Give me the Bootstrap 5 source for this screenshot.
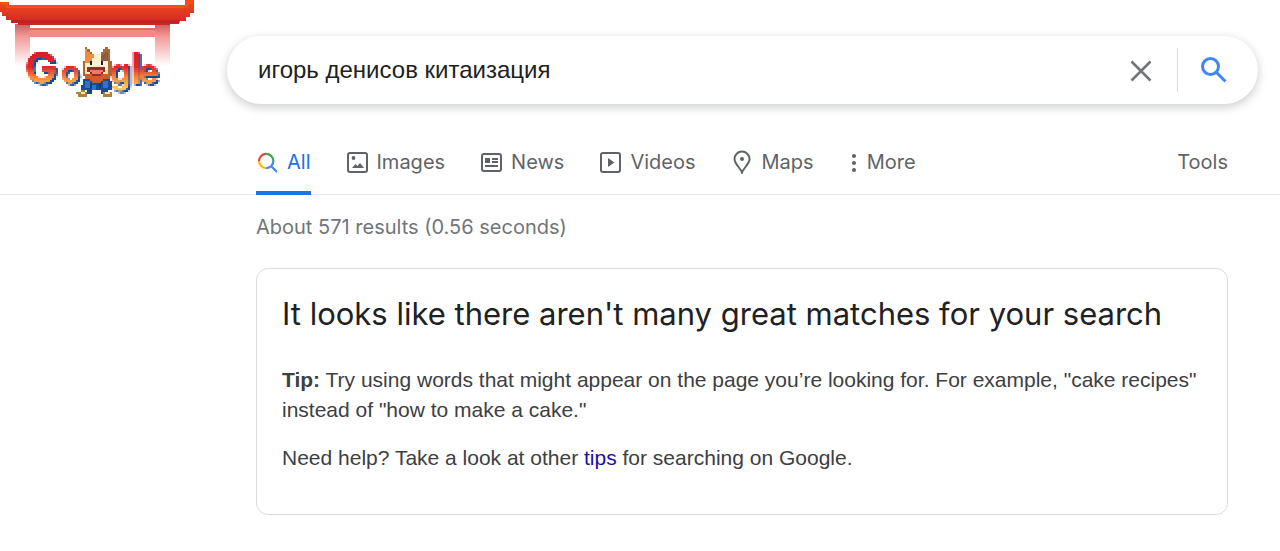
<!DOCTYPE html>
<html lang="en">
<head>
<meta charset="utf-8">
<meta name="viewport" content="width=device-width, initial-scale=1">
<title>игорь денисов китаизация - Google Search</title>
<link href="https://cdn.jsdelivr.net/npm/bootstrap@5.3.0/dist/css/bootstrap.min.css" rel="stylesheet">
<style>
:root { --brand-font: Inter, "Liberation Sans", sans-serif; --gutter: 256px; --edge: 52px; }
body { font-family: "Liberation Sans", Arial, sans-serif; color: #3c4043; background: #fff; }
.doodle-col { width: 227px; }
.doodle { display: block; width: 200px; height: 104px; }
.search-pill { height: 68px; border-radius: 34px; margin: 36px 22px 0 0; padding-left: 31px; box-shadow: 0 3px 9px 1px rgba(32,33,36,.2); }
.search-pill input { font-size: 24px; line-height: 30px; color: #202124; outline: 0; }
.search-pill button { color: #70757a; }
.clear-btn { width: 72px; }
.go-btn { width: 81px; border-left: 1px solid #dadce0; height: 44px; padding: 0 8px 0 0; }
.tabs-bar { margin-top: 30px; height: 61px; padding: 0 var(--edge) 0 var(--gutter); border-bottom: 1px solid #e4e6e9; font-family: var(--brand-font); font-size: 20px; line-height: 24px; }
.tabs-list { gap: 36px; }
.tab-link { display: flex; align-items: center; gap: 9px; color: #5f6368; text-decoration: none; height: 61px; padding-bottom: 6px; }
.tab-link.active { color: #1a73e8; box-shadow: inset 0 -4px #1a73e8; gap: 10px; }
.tab-link svg { width: 21px; height: 24px; }
.tab-link .dots { width: 8px; }
.results { padding: 20px var(--edge) 0 var(--gutter); }
.stats { font-family: var(--brand-font); font-size: 20px; line-height: 24px; color: #70757a; margin-bottom: 29px; }
.notice { border: 1px solid #dadce0; border-radius: 12px; padding: 25px 25px 41px; font-size: 21px; line-height: 30px; color: #3c4043; }
.notice h1 { font-family: var(--brand-font); font-size: 31px; line-height: 40px; font-weight: 400; color: #202124; margin-bottom: 31px; }
.notice p { margin-bottom: 18px; }
.notice a { color: #1a0dab; text-decoration: none; }
</style>
</head>
<body>
<header>
  <form class="d-flex align-items-start" role="search">
    <a href="#" class="doodle-col flex-shrink-0" aria-label="Google home">
      <svg class="doodle" viewBox="0 0 200 104">
        <defs>
          <linearGradient id="beam" x2="0" y2="1"><stop offset="0" stop-color="#f04a12"/><stop offset=".5" stop-color="#e03a22"/><stop offset="1" stop-color="#c82422"/></linearGradient>
          <linearGradient id="post" x2="0" y2="1"><stop offset="0" stop-color="#c96060"/><stop offset=".3" stop-color="#f39a98"/><stop offset="1" stop-color="#fff"/></linearGradient>
          <linearGradient id="sunset" gradientUnits="userSpaceOnUse" x1="0" y1="52" x2="0" y2="92"><stop offset="0" stop-color="#dd1c25"/><stop offset=".36" stop-color="#e4252c"/><stop offset=".6" stop-color="#f5803c"/><stop offset=".85" stop-color="#fdc14e"/><stop offset="1" stop-color="#fed46c"/></linearGradient>
          <filter id="pixels" filterUnits="userSpaceOnUse" x="20" y="40" width="150" height="62" color-interpolation-filters="sRGB">
            <feDropShadow dx="2" dy="2" stdDeviation="0" flood-color="#124c9b" result="letters"/>
            <feFlood x="20" y="40" width="1" height="1" flood-color="#000"/>
            <feComposite in2="SourceGraphic" operator="over" x="20" y="40" width="2" height="2" result="dot"/>
            <feTile in="dot" result="grid"/>
            <feComposite in="letters" in2="grid" operator="in" result="a"/>
            <feOffset in="a" dx="1" dy="0" result="b"/>
            <feOffset in="a" dx="0" dy="1" result="c"/>
            <feOffset in="a" dx="1" dy="1" result="d"/>
            <feMerge><feMergeNode in="a"/><feMergeNode in="b"/><feMergeNode in="c"/><feMergeNode in="d"/></feMerge>
          </filter>
        </defs>
        <path fill="url(#post)" d="M15 24h15v42H15zM155 24h15v42h-15z"/>
        <path fill="#f18a84" d="M29 28h126v9H29z"/><path fill="#e96b65" d="M29 28h126v2H29z"/>
        <path fill="url(#beam)" d="M0 2h9v3h176V0h9v13h-4v4h-4v4h-7v3h-9v1H18v-2h-7v-3H6v-4H2v-4H0z"/>
        <path fill="#f4571a" d="M1 2h7v3h178V1h7v3h-5v4H6V5H1z" opacity=".7"/>
        <path fill="#b61e22" d="M12 20h168v3H12z" opacity=".6"/>
        <g font-family="Inter, sans-serif" font-weight="700" fill="url(#sunset)" filter="url(#pixels)">
          <text x="24" y="83" font-size="44">G</text><text x="60" y="83" font-size="32">o</text><text x="109" y="83" font-size="34">g</text><text x="130" y="83" font-size="42">l</text><text x="138" y="83" font-size="34">e</text>
        </g>
        <g transform="translate(76 47) scale(2.250)" shape-rendering="crispEdges">
          <path fill="#a86a34" d="M4 0h1v1h1v1h1v1h4V2h1V1h1V0h1v1h1v5h1v7h-1v2h-2v2H6v-2H4v-2H3V6h1z"/>
          <path fill="#ef8d3c" d="M4 1h1v1h1v1h2v2H7v2H4z"/>
          <path fill="#8e5948" d="M11 4h1V3h1V2h1v5h-3z"/>
          <path fill="#fff1cd" d="M8 3h3v3h3v6H4V7h3V5h1z"/>
          <path fill="#fbd89a" d="M4 10h1v2H4zM13 10h1v2h-1z"/>
          <path fill="#241d28" d="M6 6h1v2H6zM11 6h1v2h-1z"/>
          <path fill="#8d2f2d" d="M5 9h8v2h-1v1h-1v1H7v-1H6v-1H5z"/>
          <path fill="#f47762" d="M6 10h6v1h-1v1H7v-1H6z"/>
          <path fill="#d45a28" d="M4 12h3v1h4v-1h3v2h-2v1H6v-1H4z"/>
          <path fill="#124c9b" d="M3 14h3v1h1v1h4v-1h1v-1h3v1h1v4h-2v2h-3v-2H7v2H5v-2H4v1H2v-3h1z"/>
          <path fill="#2f70d2" d="M4 15h2v3H4zM7 17h2v2H7zM12 15h2v3h-2z"/>
          <path fill="#173b75" d="M6 16h1v2H6zM10 16h1v2h-1zM6 19h1v1H6z"/>
          <path fill="#a98249" d="M2 19h2v1h1v2H1v-1H0v-1h2zM12 20h4v2h-4z"/>
          <path fill="#fbe4b5" d="M2 20h2v1H2zM13 20h2v1h-2z"/>
        </g>
      </svg>
    </a>
    <div class="search-pill d-flex align-items-center flex-grow-1 bg-white">
      <input class="border-0 p-0 flex-grow-1 bg-transparent" type="text" aria-label="Search" value="игорь денисов китаизация">
      <button class="clear-btn btn p-0 border-0" type="reset" aria-label="Clear">
        <svg width="22" height="22" viewBox="0 0 22 22" fill="none" stroke="#70757a" stroke-width="2.600"><path d="M1.500 1.500l19 19M20.500 1.500l-19 19"/></svg>
      </button>
      <button class="go-btn bg-transparent border-top-0 border-end-0 border-bottom-0" type="submit" aria-label="Search">
        <svg width="26" height="26" viewBox="0 0 26 26" fill="none" stroke="#4285f4" stroke-width="3"><circle cx="9.500" cy="9.500" r="8"/><path d="M15.500 15.500l9 9"/></svg>
      </button>
    </div>
  </form>
  <nav class="tabs-bar d-flex justify-content-between" aria-label="Search types">
    <div class="tabs-list d-flex">
      <a class="tab-link active" href="#" aria-current="page">
        <svg viewBox="0 0 21 24" fill="none" stroke-width="2.200"><path stroke="#ea4335" d="M3 11A7.200 7.200 0 0 1 10.200 3.800"/><path stroke="#34a853" d="M10.200 3.800a7.200 7.200 0 0 1 7.200 7.200"/><path stroke="#fbbc04" d="M3 11a7.200 7.200 0 0 0 7.200 7.200"/><path stroke="#4285f4" d="M10.200 18.200A7.200 7.200 0 0 0 17.400 11M15 16l6 6"/></svg>All</a>
      <a class="tab-link" href="#"><svg viewBox="0 0 21 24" fill="none" stroke="#5f6368" stroke-width="2"><rect x="1" y="3" width="19" height="19" rx="2"/><circle cx="6.500" cy="8" r="1.900" fill="#5f6368" stroke="none"/><path d="M5 18l3.500-4 2 2 2.500-3 4 5z" fill="#5f6368" stroke="none"/></svg>Images</a>
      <a class="tab-link" href="#"><svg viewBox="0 0 21 24" fill="none" stroke="#5f6368" stroke-width="2"><rect x="1" y="4" width="19" height="17" rx="2"/><path fill="#5f6368" stroke="none" d="M4 8h5v5H4zM11 8h6v2h-6zM11 11h6v2h-6zM4 15h13v2H4z"/></svg>News</a>
      <a class="tab-link" href="#"><svg viewBox="0 0 21 24" fill="none" stroke="#5f6368" stroke-width="2"><rect x="1" y="3" width="19" height="19" rx="2"/><path fill="#5f6368" stroke="none" d="M8 8l6.500 4.500L8 17z"/></svg>Videos</a>
      <a class="tab-link" href="#"><svg viewBox="0 0 21 24" fill="none" stroke="#5f6368" stroke-width="2"><path d="M10 22.500C8.500 18 2.500 14 2.500 9a7.500 7.500 0 0 1 15 0c0 5-6 9-7.500 13.500z"/><circle cx="10" cy="9" r="2" fill="#5f6368" stroke="none"/></svg>Maps</a>
      <a class="tab-link" href="#"><svg class="dots" viewBox="0 0 8 24" fill="#5f6368"><circle cx="4" cy="6" r="2"/><circle cx="4" cy="13" r="2"/><circle cx="4" cy="20" r="2"/></svg>More</a>
    </div>
    <a class="tab-link" href="#">Tools</a>
  </nav>
</header>
<main class="results">
  <div class="stats">About 571 results (0.56 seconds)</div>
  <section class="notice">
    <h1>It looks like there aren't many great matches for your search</h1>
    <p><strong>Tip:</strong> Try using words that might appear on the page you’re looking for. For example, "cake recipes" instead of "how to make a cake."</p>
    <p class="mb-0">Need help? Take a look at other <a href="#">tips</a> for searching on Google.</p>
  </section>
</main>
<script src="https://cdn.jsdelivr.net/npm/bootstrap@5.3.0/dist/js/bootstrap.bundle.min.js"></script>
</body>
</html>
